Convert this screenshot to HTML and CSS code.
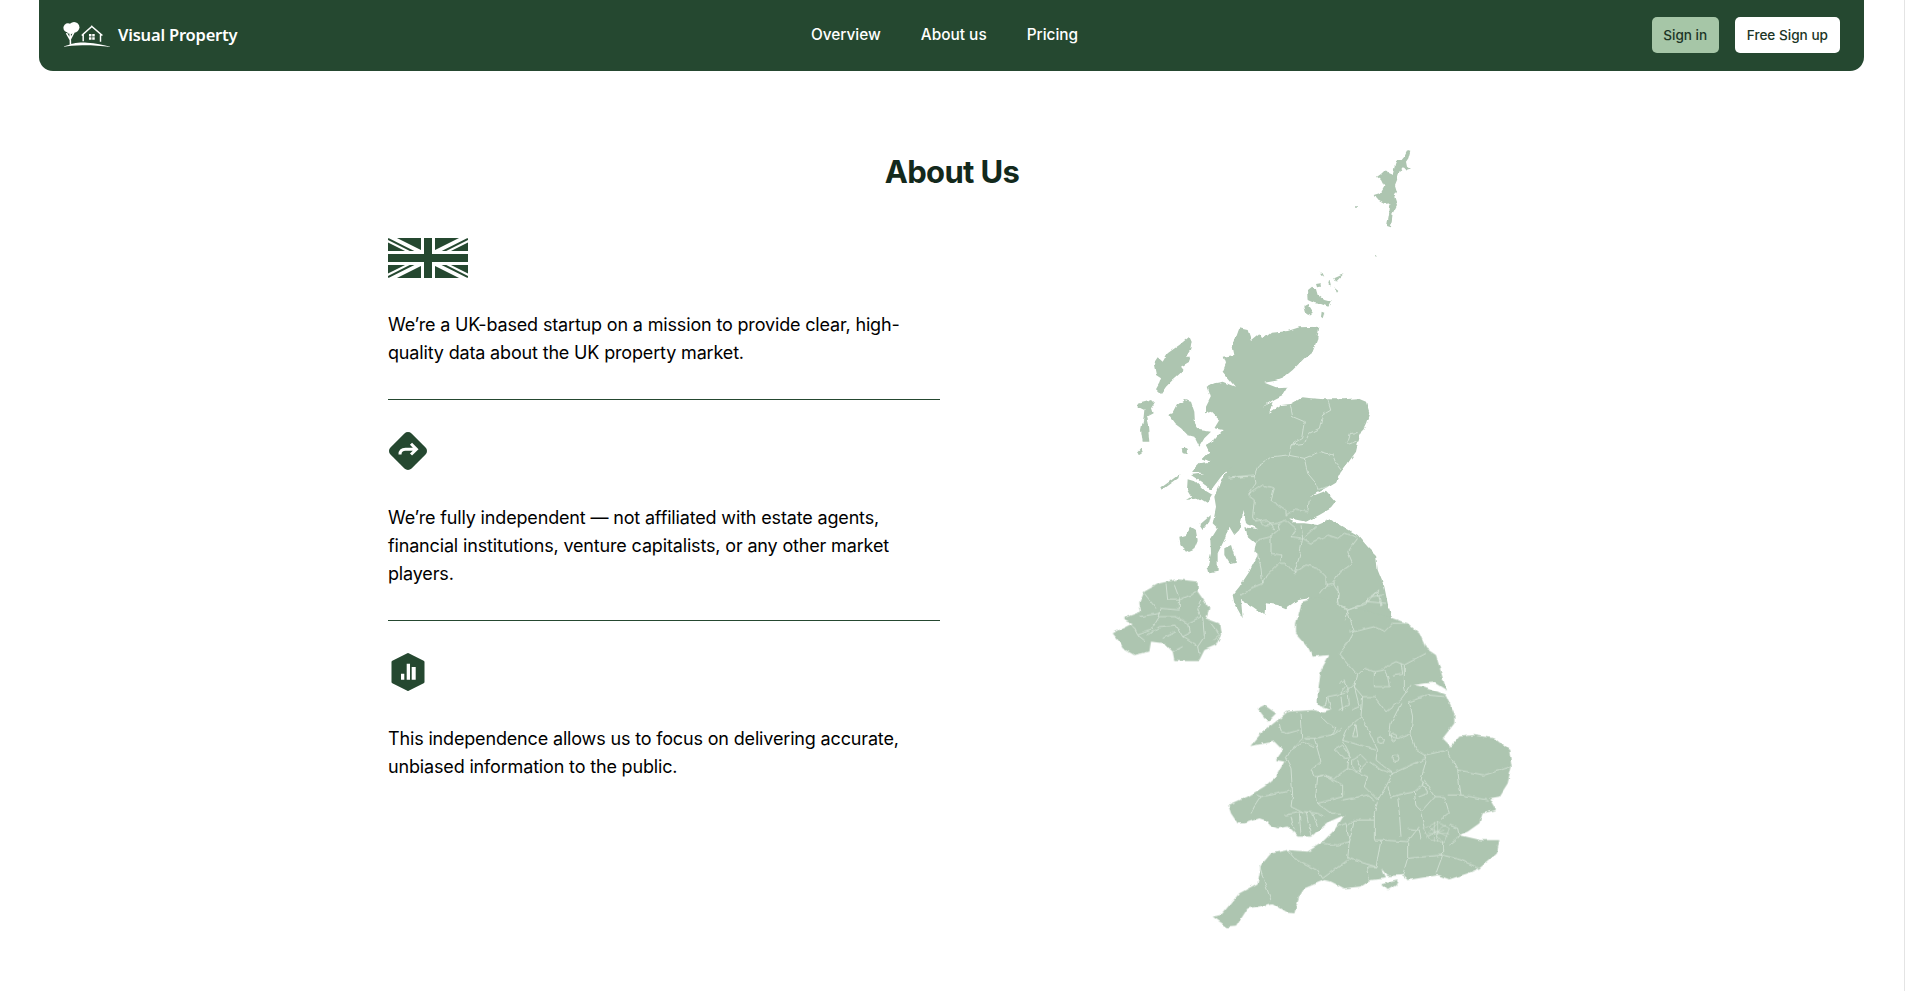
FILE: index.html
```html
<!DOCTYPE html>
<html lang="en">
<head>
    <meta charset="UTF-8">
    <meta name="viewport" content="width=device-width, initial-scale=1.0">
    <title>Visual Property - About Us</title>
    <link rel="stylesheet" href="styles.css">
</head>
<body>
    <div class="page">
        <header class="navbar">
            <a class="brand" href="#">
                <svg class="brand-logo" viewBox="0 0 52 28" aria-hidden="true">
                    <circle cx="5" cy="6.5" r="4.6" fill="#fff"/>
                    <circle cx="11.5" cy="6" r="5.6" fill="#fff"/>
                    <circle cx="8" cy="9" r="4" fill="#fff"/>
                    <path d="M7.8 24 L7.4 13 M7.6 19 L3.6 12 M7.8 18 L11.5 11" fill="none" stroke="#fff" stroke-width="1.6"/>
                    <path d="M0 26.5 C10 22.5 15 21.5 25 22 C34 22.5 42 24 50 26.6 C38 25 28 24.4 20 24.6 C12 24.8 6 25.4 0 26.5Z" fill="#fff"/>
                    <path d="M21 20.5 V13 L30 5 L39 13 V21 M19.5 14.6 L30 5 L41 14.6" fill="none" stroke="#fff" stroke-width="1.5"/>
                    <path d="M27 13h2.6v2.6H27zM30.4 13H33v2.6h-2.6zM27 16.4h2.6V19H27zM30.4 16.4H33V19h-2.6z" fill="#fff"/>
                </svg>
                <span class="brand-name">Visual Property</span>
            </a>
            <nav class="nav-links">
                <a href="#">Overview</a>
                <a href="#">About us</a>
                <a href="#">Pricing</a>
            </nav>
            <div class="nav-actions">
                <a class="btn btn-green" href="#">Sign in</a>
                <a class="btn btn-white" href="#">Free Sign up</a>
            </div>
        </header>

        <main class="about">
            <h1 class="about-title">About Us</h1>

            <div class="about-points">
                <section class="point">
                    <svg class="flag-icon" viewBox="0 0 80 40" aria-hidden="true">
                        <rect width="80" height="40" fill="#254830"/>
                        <path d="M0 0 L80 40 M80 0 L0 40" stroke="#fff" stroke-width="8"/>
                        <path d="M0 1 L36 19 M44 21 L80 39 M80 1 L44 19 M36 21 L0 39" stroke="#254830" stroke-width="2"/>
                        <path d="M40 0 V40 M0 20 H80" stroke="#fff" stroke-width="14"/>
                        <path d="M40 0 V40 M0 20 H80" stroke="#254830" stroke-width="8"/>
                    </svg>
                    <p>We’re a UK-based startup on a mission to provide clear, high-<br>quality data about the UK property market.</p>
                </section>

                <section class="point">
                    <svg class="point-icon" viewBox="0 0 40 40" aria-hidden="true">
                        <path d="M20 6 L34 20 L20 34 L6 20 Z" fill="#254830" stroke="#254830" stroke-width="10" stroke-linejoin="round"/>
                        <path d="M12 23.5 C12 20 14 18.3 17.5 18.3 H28 M23 12.8 L28.4 18.3 L23 23.5" fill="none" stroke="#fff" stroke-width="3"/>
                    </svg>
                    <p>We’re fully independent — not affiliated with estate agents,<br>financial institutions, venture capitalists, or any other market<br>players.</p>
                </section>

                <section class="point">
                    <svg class="point-icon" viewBox="0 0 40 40" aria-hidden="true">
                        <path d="M20 2.5 L35 10 V30 L20 37.5 L5 30 V10 Z" fill="#254830" stroke="#254830" stroke-width="3" stroke-linejoin="round"/>
                        <path d="M13 21.7h3.3v6H13zM18.7 11.7H22v16h-3.3zM23.7 15h4v12.7h-4z" fill="#fff"/>
                    </svg>
                    <p>This independence allows us to focus on delivering accurate,<br>unbiased information to the public.</p>
                </section>
            </div>

            <svg class="uk-map" viewBox="0 0 1275 2430" aria-label="Map of the United Kingdom">
                <defs>
                    <filter id="rough" filterUnits="userSpaceOnUse" x="0" y="0" width="1275" height="2430">
                        <feTurbulence type="fractalNoise" baseFrequency="0.045" numOctaves="2" seed="4" result="noise"/>
                        <feDisplacementMap in="SourceGraphic" in2="noise" scale="11" xChannelSelector="R" yChannelSelector="G"/>
                    </filter>
                </defs>
                <g filter="url(#rough)">
                <!-- north of scotland and islands -->
                <g class="land">
                    <path d="M950,60 958,62 952,85 945,95 948,110 958,118 945,122 935,112 925,125 918,150 912,165 918,185 910,200 918,225 905,250 900,292 888,288 895,245 898,220 880,222 855,208 848,195 870,188 880,170 870,150 858,140 870,132 885,118 892,130 905,135 912,105 918,90 932,90 940,80Z"/>
                    <circle cx="798" cy="231" r="3"/>
                    <circle cx="855" cy="377" r="2.5"/>
                    <path d="M648,480 660,470 675,478 680,495 700,510 720,515 712,530 690,522 672,520 650,510Z"/>
                    <path d="M640,530 650,525 665,548 655,555 645,548Z"/>
                    <path d="M692,545 700,548 695,565 690,560Z"/>
                    <path d="M675,462 688,460 690,470 678,472Z"/>
                    <path d="M685,425 695,430 700,440 692,435Z"/>
                    <path d="M715,450 720,470 712,462Z"/>
                    <path d="M730,445 758,432 745,445 735,455Z"/>
                    <path d="M730,470 742,480 738,485Z"/>
                    <path d="M295,620 302,635 298,660 285,680 300,680 295,695 270,710 278,720 262,735 245,750 225,770 210,792 195,778 205,760 210,745 195,735 188,700 200,682 215,695 230,670 265,645Z"/>
                    <path d="M140,822 165,815 180,810 190,820 180,835 185,850 165,860 170,880 175,935 155,935 150,900 158,860 160,840 140,830Z"/>
                    <path d="M138,968 150,955 155,965 145,972Z"/>
                    <path d="M232,855 245,850 258,825 280,810 300,815 310,845 312,880 325,900 360,905 340,925 325,950 310,920 290,915 270,895 250,880Z"/>
                    <circle cx="282" cy="962" r="9"/>
                    <path d="M208,1075 265,1033 262,1045 225,1072 212,1082Z"/>
                    <path d="M445,595 470,600 480,630 505,610 515,628 540,608 590,603 625,592 685,590 678,630 665,665 640,685 605,720 575,745 555,752 520,758 555,772 590,770 575,795 550,808 515,830 545,815 535,848 570,825 600,822 635,802 660,805 700,808 760,808 800,805 825,815 835,850 825,880 805,920 795,965 770,1000 750,1025 400,1025 345,1000 360,995 335,985 355,965 345,945 370,930 395,900 370,895 385,870 360,845 345,850 345,830 360,800 350,770 370,760 395,755 432,770 395,725 405,700 398,680 430,675 425,650Z"/>
                </g>
                <!-- central belt -->
                <g class="land" transform="translate(240,930)">
                    <path d="M130,0 560,0 555,25 530,70 510,95 495,125 470,140 415,172 465,152 495,185 480,205 445,225 405,245 355,235 370,250 400,250 440,255 480,238 520,262 560,285 590,320 615,345 620,390 640,440 650,490 665,540 385,540 415,475 380,480 345,505 320,495 285,490 280,525 245,500 210,480 215,535 190,490 185,465 205,440 235,395 260,345 250,335 255,310 225,285 220,262 265,268 225,250 218,210 205,270 190,285 175,260 160,300 140,340 140,395 115,400 110,380 120,340 118,300 140,265 125,250 135,200 130,170 150,120 185,75 150,110 120,150 90,125 60,105 100,100 60,95 85,70 120,65 95,55 115,35 105,15Z"/>
                    <path d="M45,180 60,170 48,150 50,118 75,125 100,150 125,165 110,190 85,175Z"/>
                    <path d="M25,290 45,285 60,260 75,270 80,300 70,325 45,335 28,315Z"/>
                    <path d="M85,255 120,225 115,245 95,270Z"/>
                    <path d="M160,325 180,315 195,365 175,370 160,345Z"/>
                </g>
                <!-- ireland, england, wales -->
                <g class="land" transform="translate(0,1170)">
                    <path d="M65,340 95,325 125,310 95,295 150,275 145,250 160,215 205,190 260,178 320,185 320,215 355,265 345,295 385,310 390,345 375,375 340,390 325,420 250,420 245,395 220,370 180,365 175,395 130,405 95,385 85,365Z"/>
                    <path d="M500,565 520,555 555,580 530,605Z"/>
                    <path d="M870,1090 920,1078 915,1095 890,1110Z"/>
                    <path d="M905,295 950,310 985,340 1005,385 1035,405 1060,490 1068,512 1030,488 1000,490 968,495 1000,500 1040,515 1065,525 1090,580 1090,610 1055,655 1080,680 1105,650 1150,645 1210,655 1255,690 1262,740 1250,790 1225,830 1195,835 1215,870 1175,880 1165,910 1130,935 1105,945 1170,960 1225,960 1218,1000 1165,1045 1130,1060 1075,1078 1040,1065 950,1080 935,1065 890,1068 870,1045 885,1075 840,1080 810,1100 760,1105 720,1085 700,1080 640,1105 625,1130 610,1180 590,1178 545,1150 500,1160 470,1165 435,1220 410,1222 365,1190 390,1185 445,1120 500,1090 510,1035 540,1000 590,990 650,995 690,970 730,930 760,885 715,905 690,925 660,950 620,950 590,920 560,925 535,915 535,905 505,895 460,910 440,910 420,880 412,855 470,830 520,800 555,770 580,725 555,720 575,690 550,665 478,678 510,640 560,600 590,575 665,570 700,578 720,570 680,555 680,520 690,450 715,405 665,410 650,380 615,340 615,310 635,245 680,232Z"/>
                </g>
                <!-- county borders -->
                <g class="borders">
                    <path d="M598,825 605,860 640,875 632,925 600,945 595,975M710,808 720,840 695,855 685,895 655,910 640,940 600,945M770,935 778,910 800,908M765,935 775,945 800,935M490,1035 500,1010 545,980 590,975 640,985 690,965 725,975 735,1000 750,1020M640,985 650,1030 675,1060 680,1078 710,1070M410,1045 450,1040 490,1040"/>
                </g>
                <g class="borders" transform="translate(240,930)">
                    <path d="M250,105 200,110M250,105 255,130 230,165 250,180 245,230 255,245 290,240 310,270M230,165 275,135 310,145 300,180 345,210 345,225 370,210 410,215 415,180M255,235 280,255 320,250 345,240M320,250 325,270 300,290 260,300 255,310M345,240 375,265 360,290 395,295M390,255 395,295 435,260M395,295 420,310 470,285 500,295 520,280 560,290M300,290 300,340 330,345 325,370 290,405 275,430 240,445 210,465M395,295 385,350 370,400 345,370 325,370M370,400 405,375 440,385 465,410 465,435 445,460M260,345 270,385 275,430M560,295 530,335 545,370 510,395 485,430 505,460 500,495 530,510 590,485 620,450M485,430 465,435M530,510 525,540M600,470 640,465M620,450 630,500M590,485 645,490"/>
                </g>
                <g class="borders" transform="translate(0,1170)">
                    <path d="M775,335 790,335 850,320 880,335 905,310 950,310M770,275 790,335 770,370 745,400M740,195 745,260 770,270 830,250 830,235 865,210M745,400 800,465 790,500 815,530 810,590 830,625 860,690 855,720 905,760M800,465 820,445 850,455 880,450 895,435 915,425 940,435 1005,400M850,455 850,500 895,500 890,470 880,450M905,465 935,460 930,430M940,435 940,500 945,520 960,495M795,490 760,520 710,530 700,565M745,490 760,480 765,500 745,525M770,500 775,555 740,570M790,500 805,560 780,570M710,530 720,570M750,530 755,570M815,530 850,530 885,575 930,540 945,520M955,545 965,590 960,640 975,690 1000,705M955,545 1010,525 1060,530M930,550 900,610 895,650 925,655 960,640M785,650 795,612 800,650ZM810,590 770,625 755,660 775,700 770,745 730,775 700,765 670,770 660,750 690,725 680,690 670,655 720,645 735,625 710,610 690,590M640,655 670,655M630,580 635,655 600,690 585,715 600,745 605,825 600,860M565,610 570,635 590,640 625,630M600,690 640,665 670,680M750,625 720,645M755,660 855,690M730,690 755,675 780,712 760,715ZM785,720 810,705 830,725 800,755 785,740ZM800,720 810,755M835,725 870,750 905,760 885,800 860,840 820,800 830,770 770,745M905,760 1005,715 1000,705 1070,690M1005,720 990,780 1000,790 970,815 945,820 900,830 890,800M1070,695 1100,750 1105,790 1110,825 1190,840M1100,750 1180,765 1260,740M1000,780 1030,830 1060,830 1075,880 1050,900M970,815 975,860 990,875 1030,830M995,785 1010,820 985,830M1070,825 1110,825M860,840 850,880 850,960 870,960 950,965 985,920M950,965 950,1015 1055,1005 1055,960M1055,1005 1035,1060M1055,1005 1110,1020 1165,1045M950,1015 935,1065M870,960 855,1040 770,1015 775,965 740,975 690,970M775,965 765,910 740,920M850,900 790,900 770,915M790,900 775,970M590,990 610,1015 680,1050 695,1075 770,1020M505,1035 520,1085 540,1140M680,770 675,820 680,850 720,880 750,880M680,770 700,765 755,795 755,830 680,850M755,840 830,825 850,840M600,860 640,880M495,825 510,830 490,860 480,880M600,812 540,825 510,830M580,885 610,880 640,875 680,880 700,890M600,890 610,930M625,880 630,945M645,875 660,945M665,880 680,920M920,830 925,880 930,950M855,1040 830,1040 835,1085M125,315 140,345 180,330 205,290 210,265 265,270 265,235 250,195M225,190 230,240 265,240 320,215M205,290 255,290 290,310 330,290 320,265 330,240M145,290 210,280M160,220 195,265M205,320 255,315 275,350 320,380 340,350 335,290M140,345 165,365M205,320 170,345M255,335 215,355M275,380 245,395M290,310 295,340 275,350M320,380 325,405M360,310 385,345 370,360M950,925 985,930 990,960M1075,915 1100,925 1105,950 1075,975M990,880 1000,925"/>
                    <circle cx="870" cy="660" r="10"/>
                    <circle cx="908" cy="652" r="10"/>
                    <circle cx="915" cy="715" r="9"/>
                    <path class="borders-fine" d="M1000,925 1040,905 1075,925 1060,965 1020,960ZM1010,915 1050,960M1030,905 1030,965M1000,940 1075,940M1015,950 1065,915M1045,905 1015,935M1020,925 1070,950M1005,950 1060,930M1040,905 1040,965"/>
                </g>
                </g>
            </svg>
        </main>
    </div>
</body>
</html>
```

FILE: styles.css
```css
body {
    margin: 0;
    padding: 0;
    background-color: #fff;
    font-family: Inter, "Noto Sans", sans-serif;
    color: #000;
}

a {
    text-decoration: none;
    color: inherit;
}

.page {
    min-height: 991px;
    box-sizing: border-box;
    border-right: 1px solid #e4e4e4;
}

.navbar {
    display: flex;
    align-items: center;
    justify-content: space-between;
    box-sizing: border-box;
    height: 71px;
    margin: 0 40px 0 39px;
    padding: 0 24px 2px;
    background-color: #254830;
    border-radius: 0 0 14px 14px;
    color: #fff;
}

.brand {
    display: flex;
    align-items: center;
    gap: 5px;
}

.brand-logo {
    width: 50px;
    height: 28px;
}

.brand-name {
    font-family: "Noto Sans", sans-serif;
    font-size: 16.5px;
    font-weight: 600;
    letter-spacing: -0.2px;
}

.nav-links {
    display: flex;
    gap: 40px;
    font-size: 15.4px;
    font-weight: 500;
}

.nav-actions {
    display: flex;
    gap: 16px;
}

.btn {
    display: flex;
    align-items: center;
    justify-content: center;
    height: 36px;
    box-sizing: border-box;
    border-radius: 5px;
    font-size: 13.6px;
    font-weight: 500;
    color: #1c3526;
}

.btn-green {
    padding: 0 11.5px;
    background-color: #a6c6a7;
}

.btn-white {
    padding: 0 12px;
    background-color: #fff;
}

.about {
    display: grid;
    grid-template-columns: 552px 1fr;
    grid-template-rows: auto 1fr;
    width: 1128px;
    margin: 59px auto 0;
}

.about-title {
    grid-column: 1 / -1;
    grid-row: 1;
    margin: 22px 0 46px;
    text-align: center;
    font-size: 31px;
    line-height: 40px;
    font-weight: 700;
    letter-spacing: -0.65px;
    color: #13291c;
}

.about-points {
    grid-column: 1;
    grid-row: 2;
}

.point {
    padding-bottom: 32px;
    margin-bottom: 31px;
    border-bottom: 1px solid #254830;
}

.point:last-child {
    border-bottom: none;
    margin-bottom: 0;
}

.point svg {
    display: block;
}

.point p {
    margin: 33px 0 0;
    font-size: 18px;
    line-height: 28px;
    letter-spacing: -0.16px;
    white-space: nowrap;
}

.flag-icon {
    width: 80px;
    height: 40px;
}

.point-icon {
    width: 40px;
    height: 40px;
}

.uk-map {
    grid-column: 2;
    grid-row: 1 / span 2;
    justify-self: end;
    width: 425px;
    height: 810px;
}

.land {
    fill: #adc5b0;
}

.borders {
    fill: none;
    stroke: #d5e3d8;
    stroke-width: 2.6;
    stroke-linejoin: round;
}

.borders-fine {
    stroke-width: 1.6;
}
```
